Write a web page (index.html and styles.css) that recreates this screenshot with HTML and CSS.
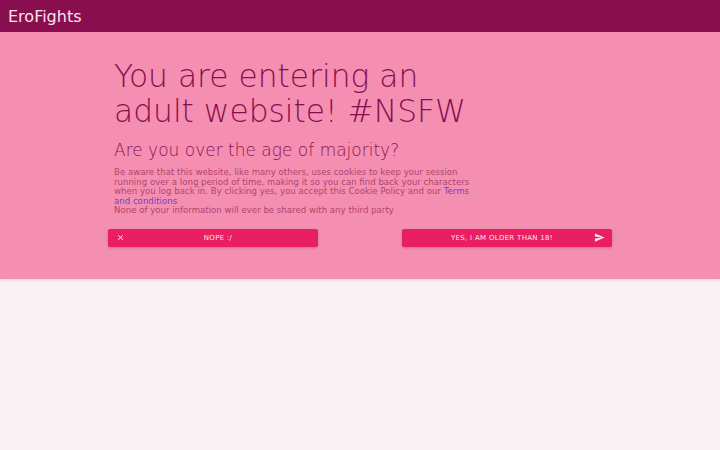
FILE: index.html
```html
<!DOCTYPE html>
<html lang="en">
<head>
    <meta charset="UTF-8">
    <meta name="viewport" content="width=device-width, initial-scale=1.0">
    <title>EroFights</title>
    <link rel="stylesheet" href="styles.css">
</head>
<body>
    <header class="topbar">
        <span class="brand">EroFights</span>
    </header>
    <section class="warning">
        <div class="warning-inner">
            <div class="warning-text">
                <h1>You are entering an adult website! #NSFW</h1>
                <h2>Are you over the age of majority?</h2>
                <p>
                    Be aware that this website, like many others, uses cookies to keep your session running over a long period of time, making it so you can find back your characters when you log back in. By clicking yes, you accept this Cookie Policy and our <a href="#">Terms and conditions</a><br>
                    None of your information will ever be shared with any third party
                </p>
            </div>
            <div class="actions">
                <button class="btn">
                    <svg class="btn-icon" viewBox="0 0 24 24" width="9" height="9"><path d="M19 6.41L17.59 5 12 10.59 6.41 5 5 6.41 10.59 12 5 17.59 6.41 19 12 13.41 17.59 19 19 17.59 13.41 12z" fill="currentColor"/></svg>
                    <span class="btn-label">Nope :/</span>
                </button>
                <button class="btn">
                    <span class="btn-label">Yes, I am older than 18!</span>
                    <svg class="btn-icon" viewBox="0 0 24 24" width="11" height="11"><path d="M2.01 21L23 12 2.01 3 2 10l15 2-15 2z" fill="currentColor"/></svg>
                </button>
            </div>
        </div>
    </section>
</body>
</html>
```

FILE: styles.css
```css
body, html {
    margin: 0;
    padding: 0;
    height: 100%;
    font-family: "DejaVu Sans", sans-serif;
    background-color: #f8f2f5;
}

.topbar {
    height: 32px;
    background-color: #880e4f;
    display: flex;
    align-items: center;
    padding: 0 8px;
}
.brand {
    color: #fce4ec;
    font-size: 16px;
}

.warning {
    background-color: #f48fb1;
    padding: 27px 0 32px;
    box-shadow: 0 1px 3px rgba(0,0,0,0.12);
}
.warning-inner {
    width: 504px;
    margin: 0 auto;
}
.warning-text {
    width: 360px;
    padding: 0 6px;
}
.warning h1 {
    margin: 0;
    font-size: 31.3px;
    font-weight: 200;
    line-height: 35px;
    color: #880e4f;
}
.warning h2 {
    margin: 11px 0 0;
    font-size: 17px;
    font-weight: 200;
    color: #8c1452;
}
.warning p {
    margin: 8px 0 0;
    font-size: 8.6px;
    line-height: 9.5px;
    color: #b0456f;
}
.warning a {
    color: #7141c4;
    text-decoration: none;
}

.actions {
    display: flex;
    justify-content: space-between;
    margin-top: 13px;
}
.btn {
    width: 210px;
    height: 18px;
    display: flex;
    align-items: center;
    padding: 0 7px 0 8px;
    border: none;
    border-radius: 2px;
    background-color: #e91e63;
    color: #fde4ee;
    font-family: "DejaVu Sans", sans-serif;
    box-shadow: 0 1px 3px rgba(0,0,0,0.2);
    cursor: pointer;
}
.btn-label {
    flex: 1;
    text-align: center;
    font-size: 7px;
    text-transform: uppercase;
    letter-spacing: 0.3px;
}
.btn-icon {
    flex: none;
}
```
